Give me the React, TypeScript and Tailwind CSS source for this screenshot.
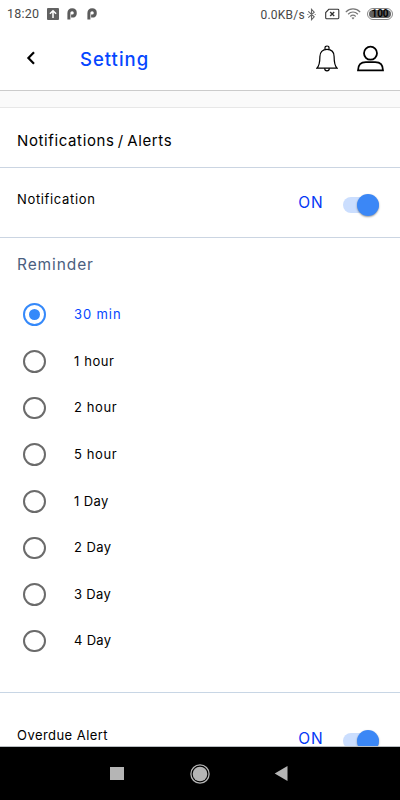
import React from 'react';

const reminders = [
  { label: '30 min', spacing: 'tracking-[0.9px]' },
  { label: '1 hour', spacing: 'tracking-[0.6px]' },
  { label: '2 hour', spacing: 'tracking-[0.6px]' },
  { label: '5 hour', spacing: 'tracking-[0.6px]' },
  { label: '1 Day', spacing: 'tracking-[0.4px]' },
  { label: '2 Day', spacing: 'tracking-[0.4px]' },
  { label: '3 Day', spacing: 'tracking-[0.3px]' },
  { label: '4 Day', spacing: 'tracking-[0.3px]' },
];

function ParkingP() {
  return (
    <svg width="10" height="12" viewBox="0 0 10 12" fill="none" stroke="#5c5c5c" strokeWidth="3">
      <path d="M1.9 11.5V4.9C1.9 3 3.2 1.8 5.1 1.8s3.2 1.3 3.2 3.1-1.3 3.2-3.2 3.2H4.1" />
    </svg>
  );
}

function StatusBar() {
  return (
    <div className="flex h-7 shrink-0 items-center pl-[7px] pr-[7px] font-['Roboto',sans-serif] text-[12.5px] text-[#484848]">
      <span className="mt-px w-8 whitespace-nowrap tracking-[0.2px]">18:20</span>
      <svg className="ml-[8px]" width="12" height="12" viewBox="0 0 12 12">
        <rect width="12" height="12" rx="1" fill="#626262" />
        <path d="M6 10V3M2.9 5.8 6 2.7l3.1 3.1" fill="none" stroke="white" strokeWidth="1.5" />
      </svg>
      <div className="ml-[8px] flex gap-[10px]">
        <ParkingP />
        <ParkingP />
      </div>
      <span className="ml-auto mt-px whitespace-nowrap text-[12px] tracking-[0.25px]">0.0KB/s</span>
      <svg className="ml-[2px]" width="9" height="13" viewBox="0 0 8 12" fill="none" stroke="#666" strokeWidth="1">
        <path d="m1 3.2 5.5 5L4 10.8V1.2l2.5 2.6L1 8.8M.2 6h.9M7 6h.8" />
      </svg>
      <svg className="ml-[9px]" width="15" height="12" viewBox="0 0 15 12" fill="none" stroke="#333" strokeWidth="1.1">
        <path d="M3.8 1.3h9.1c.6 0 .9.3.9.9v7.6c0 .6-.3.9-.9.9H1.5c-.6 0-.8-.3-.8-.9V4.5Z" />
        <path d="m5.2 4 4 4m0-4-4 4" strokeWidth="1.4" />
      </svg>
      <svg className="ml-[5px]" width="16" height="12" viewBox="0 0 16 12" fill="none" stroke="#777" strokeWidth="1.2">
        <path d="M.8 4.1C5-.1 11-.1 15.2 4.1M3.1 6.3c2.9-2.8 6.9-2.8 9.8 0M5.3 8.5c1.6-1.5 3.8-1.5 5.4 0" />
        <path d="M6.5 9.8 8 11.4l1.5-1.6c-.9-.8-2.1-.8-3 0Z" fill="#777" stroke="none" />
      </svg>
      <div className="ml-[6px] flex h-[12px] w-[26px] items-center rounded-full border border-[#888] p-px">
        <div className="flex h-2 w-full items-center justify-center rounded-full bg-[#626262] text-[10px] font-bold leading-none text-black">100</div>
      </div>
    </div>
  );
}

function Header() {
  return (
    <header className="flex h-[63px] shrink-0 items-center border-b border-[#cbcbcb] pl-[26px] pr-[16px]">
      <svg className="-mt-[2px]" width="10" height="14" viewBox="0 0 10 14" fill="none" stroke="black" strokeWidth="2.2">
        <path d="M8 1.2 2.4 7 8 12.8" />
      </svg>
      <h1 className="-mt-px ml-[44px] text-[18.5px] font-medium leading-6 tracking-[1px] text-[#0546ff]">Setting</h1>
      <svg className="ml-auto" width="22" height="28" viewBox="0 0 22 28" fill="none" stroke="black" strokeWidth="1.2">
        <path d="M9 4.1V2.8c0-1.1.8-1.8 2-1.8s2 .7 2 1.8v1.3M11 4.3c-4.6 0-7.1 3-7.1 7.2 0 6.3-.7 9.5-3 11.6h20.2c-2.3-2.1-3-5.3-3-11.6 0-4.2-2.5-7.2-7.1-7.2Z" />
        <path d="M8.7 23.3c0 1.7.8 2.6 2.3 2.6s2.3-.9 2.3-2.6" />
      </svg>
      <svg className="ml-[19px] mr-[0.5px]" width="27" height="28" viewBox="0 0 27 28" fill="none" stroke="black" strokeWidth="1.8">
        <circle cx="13.5" cy="8.2" r="6.5" />
        <path d="M1 25.4c0-5.4 2.9-8.3 7.8-8.3h9.4c4.9 0 7.8 2.9 7.8 8.3Z" />
      </svg>
    </header>
  );
}

function Toggle() {
  return (
    <div className="flex h-[22px] w-[37px] items-center">
      <div className="flex h-4 w-9 items-center justify-end rounded-full bg-[#cbdefe]">
        <div className="h-[22px] w-[22px] shrink-0 rounded-full bg-[#3b87f6] shadow-[0_1px_2px_rgba(0,0,0,0.4)]" />
      </div>
    </div>
  );
}

function AlertRow({ label, first }: { label: string; first?: boolean }) {
  return (
    <div className="flex items-start pl-[17px] pr-[20px]">
      <span className={first ? 'text-[13px] leading-5 tracking-[0.65px]' : 'text-[13px] leading-5 tracking-[0.45px]'}>{label}</span>
      <span className="ml-auto mt-[8px] text-[15.5px] leading-[12px] tracking-[0.9px] text-[#0537f5]">ON</span>
      <div className="ml-[19.5px] mt-[5px]">
        <Toggle />
      </div>
    </div>
  );
}

export default function App() {
  return (
    <div className="flex h-[800px] w-[400px] flex-col overflow-hidden bg-white font-['Inter','Liberation_Sans',sans-serif] text-black">
      <StatusBar />
      <Header />
      <main className="flex min-h-0 flex-1 flex-col overflow-hidden">
        <div className="h-[17px] shrink-0 border-b border-[#e7e7e7] bg-[#fafafa]" />
        <h2 className="flex h-[60px] shrink-0 items-center border-b border-[#cbd5e2] pl-[17px] pt-[7px] text-[15px] tracking-[0.62px] [word-spacing:-1.5px]">Notifications / Alerts</h2>
        <section className="h-[70px] shrink-0 border-b border-[#cbd5e2] pt-[21px]">
          <AlertRow label="Notification" first />
        </section>
        <section className="h-[455px] shrink-0 border-b border-[#c8d6e5]">
          <h3 className="h-[53.4px] pl-[17px] pt-[16px] text-[15.5px] leading-[22px] tracking-[0.9px] text-[#4b6080]">Reminder</h3>
          {reminders.map(({ label, spacing }, index) => (
            <div key={label} className="flex h-[46.65px] items-center pl-[23px]">
              <div className={`flex h-[22.5px] w-[22.5px] items-center justify-center rounded-full border-2 ${index === 0 ? 'border-[#3589fa]' : 'border-[#6b6b6b]'}`}>
                {index === 0 && <span className="h-[11px] w-[11px] rounded-full bg-[#3589fa]" />}
              </div>
              <span className={`ml-[28.5px] text-[13px] ${spacing} ${index === 0 ? 'text-[#0546ff]' : ''}`}>{label}</span>
            </div>
          ))}
        </section>
        <section className="shrink-0 pt-[32px]">
          <AlertRow label="Overdue Alert" />
        </section>
      </main>
      <nav className="flex h-[54px] shrink-0 items-center border-t border-[#b9bec2] bg-black pl-[110px]">
        <div className="h-[13px] w-[14px] bg-[#b5b5b5]" />
        <svg className="ml-[66px]" width="20" height="20" viewBox="0 0 20 20" fill="#b5b5b5">
          <circle cx="10" cy="10" r="9.1" fill="none" stroke="#b5b5b5" strokeWidth="1.3" />
          <circle cx="10" cy="10" r="7.3" />
        </svg>
        <svg className="ml-[64px]" width="14" height="15" viewBox="0 0 14 15">
          <path d="M13.5 0v15L.7 7.5Z" fill="#b5b5b5" />
        </svg>
      </nav>
    </div>
  );
}
